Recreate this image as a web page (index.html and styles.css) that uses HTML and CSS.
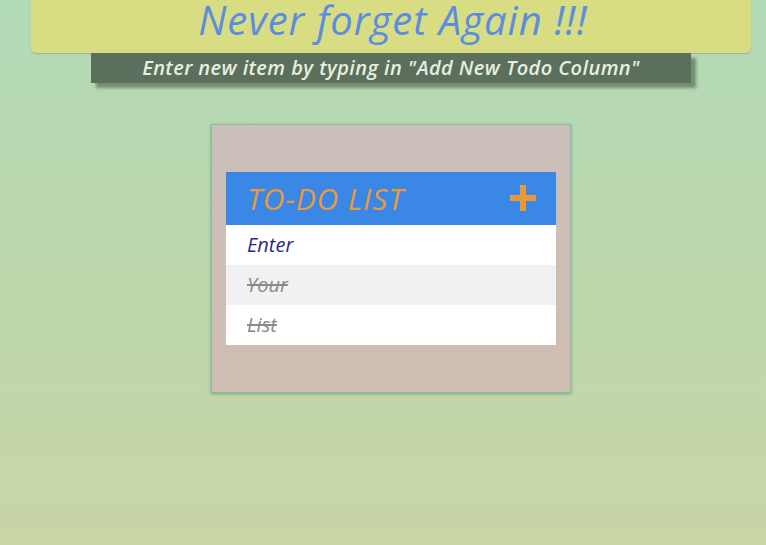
FILE: index.html
```html
<!DOCTYPE html>
<html>
<head>
<meta charset="utf-8">
<link rel="stylesheet" href="styles.css">
</head>
<body>
<header class="hero">
  <h1 class="hero-title">Never forget Again !!!</h1>
</header>
<div class="hint">Enter new item by typing in "Add New Todo Column"</div>
<main class="card">
  <section class="todo">
    <div class="todo-head">
      <h2 class="todo-title">TO-DO LIST</h2>
      <span class="plus"><svg width="26" height="26" viewBox="0 0 26 26"><rect x="0" y="10" width="26" height="6" fill="#e8993a"/><rect x="10" y="0" width="6" height="26" fill="#e8993a"/></svg></span>
    </div>
    <ul class="items">
      <li class="item active">Enter</li>
      <li class="item done alt">Your</li>
      <li class="item done">List</li>
    </ul>
  </section>
</main>
</body>
</html>
```
FILE: styles.css
```css
html, body { height: 100%; }
body {
  margin: 0;
  font-family: "Open Sans", "Noto Sans", sans-serif;
  font-style: italic;
  background: linear-gradient(180deg, #b2dab6 0%, #c8d5a5 100%);
  min-height: 545px;
}
.hero {
  margin: -20px 15px 0 31px;
  height: 73px;
  background: #d8dc82;
  border-radius: 0 0 5px 5px;
  box-shadow: 0 1px 1px rgba(80,120,80,0.35);
  display: flex;
  align-items: flex-end;
  justify-content: center;
}
.hero-title {
  margin: 0 0 11px 0;
  font-size: 40px;
  font-weight: 500;
  line-height: 44px;
  color: #5b8ee0;
  letter-spacing: 1px;
  transform: translateX(2px);
}
.hint {
  margin: 0 0 0 91px;
  width: 600px;
  height: 30px;
  background: #5c6e5c;
  box-shadow: 5px 5px 3px rgba(60,80,60,0.55);
  color: #e6efdf;
  font-size: 20px;
  font-weight: 600;
  line-height: 30px;
  text-align: center;
  letter-spacing: 0.42px;
}
.card {
  margin: 41px 0 0 211px;
  width: 330px;
  padding: 47px 14px;
  background: linear-gradient(180deg, #cbbfba 0%, #d0bdb2 100%);
  border: 1px solid #84bfa6;
  box-shadow: 0 1px 3px rgba(60,110,80,0.5);
}
.todo { background: #fff; }
.todo-head {
  height: 53px;
  background: #3a87e6;
  display: flex;
  align-items: center;
  justify-content: space-between;
  padding: 0 20px 0 21px;
}
.todo-title {
  margin: 0;
  font-size: 30px;
  font-weight: 500;
  color: #e8993a;
  letter-spacing: 0.9px;
}
.plus { display: flex; margin-top: -2px; }
.items { list-style: none; margin: 0; padding: 0; }
.item {
  height: 40px;
  line-height: 40px;
  padding-left: 21px;
  font-size: 20px;
  font-weight: 500;
  background: #fff;
}
.item.alt { background: #f1f1f1; }
.active { color: #2c2a84; }
.done { color: #8a8a8a; text-decoration: line-through; }
```
